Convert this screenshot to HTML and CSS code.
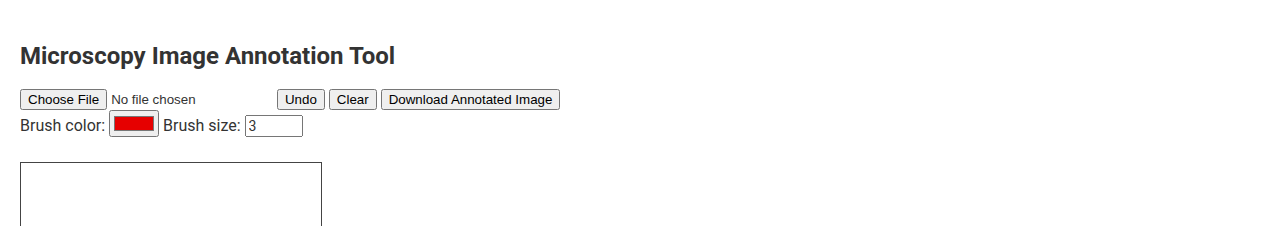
FILE: index.html
```html
<!DOCTYPE html>
<html>
<head>
<meta charset="utf-8">
<title>Microscopy Image Annotation Tool</title>
<link rel="stylesheet" href="styles.css">
</head>
<body>
<h1 class="title">Microscopy Image Annotation Tool</h1>
<div class="controls">
  <input type="file" accept="image/*">
  <button>Undo</button>
  <button>Clear</button>
  <button>Download Annotated Image</button>
  <br>
  <label>Brush color: <input type="color" value="#e60000"></label>
  <label>Brush size: <input class="size" type="number" value="3" min="1" max="50"></label>
</div>
<canvas class="board" width="300" height="300"></canvas>
</body>
</html>
```
FILE: styles.css
```css
body {
  margin: 0;
  padding: 20px;
  font-family: Roboto, "Liberation Sans", sans-serif;
  color: #333;
  background: #fff;
}
.title {
  font-size: 24px;
  margin: 22px 0 19px;
}
.controls {
  margin-bottom: 25px;
}
.size {
  width: 50px;
  font-family: Roboto, "Liberation Sans", sans-serif;
  font-size: 14px;
  color: #333;
  margin-left: 0;
}
.board {
  display: block;
  border: 1px solid #444;
}
```
